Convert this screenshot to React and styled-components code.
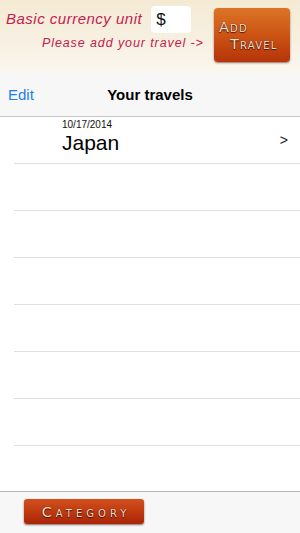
import styled, { createGlobalStyle } from "styled-components";

const travels = [{ date: "10/17/2014", name: "Japan" }];
const emptyRows = 7;

export default function App() {
  return (
    <>
      <Global />
      <Screen>
        <Header>
          <Labels>
            <CurrencyLine>
              <Script size={15} spacing={0.5}>Basic currency unit</Script>
              <CurrencyBox>$</CurrencyBox>
            </CurrencyLine>
            <Script size={12.5} spacing={0.9} indent={36}>Please add your travel -&gt;</Script>
          </Labels>
          <AddButton>
            <span>Add</span>
            <span>Travel</span>
          </AddButton>
        </Header>
        <NavBar>
          <NavEdit>Edit</NavEdit>
          <NavTitle>Your travels</NavTitle>
        </NavBar>
        <List>
          {travels.map(t => (
            <Row key={t.name}>
              <Cell>
                <DateText>{t.date}</DateText>
                <Name>{t.name}</Name>
              </Cell>
              <Chevron>&gt;</Chevron>
            </Row>
          ))}
          {Array.from({ length: emptyRows }).map((_, i) => (
            <Row key={i} />
          ))}
        </List>
        <Toolbar>
          <CategoryButton>Category</CategoryButton>
        </Toolbar>
      </Screen>
    </>
  );
}

const Global = createGlobalStyle`
  body {
    margin: 0;
    font-family: "Liberation Sans", Arial, sans-serif;
    background: #fff;
  }
`;

const Screen = styled.div`
  width: 300px;
  height: 533px;
  display: flex;
  flex-direction: column;
  overflow: hidden;
`;

const Header = styled.div`
  height: 73px;
  box-sizing: border-box;
  display: flex;
  justify-content: space-between;
  padding: 6px 10px 0 6px;
  background: linear-gradient(180deg, #f4ead4 0%, #f7f0e2 60%, #fbf8f1 100%);
`;

const Labels = styled.div`
  display: flex;
  flex-direction: column;
`;

const CurrencyLine = styled.div`
  display: flex;
  align-items: center;
  gap: 9px;
`;

const Script = styled.div`
  font-family: "Liberation Sans", Arial, sans-serif;
  font-style: italic;
  font-size: ${p => p.size}px;
  color: #c2214f;
  letter-spacing: ${p => p.spacing}px;
  padding-left: ${p => p.indent || 0}px;
  margin-top: ${p => (p.indent ? 3 : -2)}px;
`;

const CurrencyBox = styled.div`
  width: 40px;
  height: 27px;
  box-sizing: border-box;
  background: #fff;
  border-radius: 4px;
  font-size: 17px;
  color: #111;
  padding: 4px 0 0 5px;
`;

const AddButton = styled.div`
  width: 76px;
  height: 54px;
  margin-top: 2px;
  box-sizing: border-box;
  border-radius: 4px;
  background: linear-gradient(180deg, #dc7426 0%, #cc5414 50%, #b5340a 100%);
  box-shadow: 0 1px 2px rgba(80, 20, 0, 0.6);
  display: flex;
  flex-direction: column;
  justify-content: center;
  padding-left: 5px;
  gap: 1px;
  font-family: "DejaVu Sans", sans-serif;
  font-variant: small-caps;
  font-size: 14.5px;
  color: #ecdccc;
  letter-spacing: 1.2px;
  text-shadow: 0 0 1px #5a1a04, 0 1px 1px rgba(60, 10, 0, 0.9);
  span + span {
    padding-left: 11px;
  }
`;

const NavBar = styled.div`
  height: 43px;
  flex-shrink: 0;
  display: grid;
  grid-template-columns: 1fr auto 1fr;
  align-items: center;
  background: #f7f7f7;
  border-bottom: 1px solid #c8c7cc;
`;

const NavEdit = styled.div`
  padding-left: 8px;
  font-size: 15px;
  color: #1a7ef2;
`;

const NavTitle = styled.div`
  font-size: 15px;
  font-weight: bold;
  color: #000;
`;

const List = styled.div`
  flex: 1;
  overflow: hidden;
  background: #fff;
`;

const Row = styled.div`
  height: 46px;
  margin-left: 14px;
  border-bottom: 1px solid #e0e0e0;
  display: flex;
  align-items: center;
  justify-content: space-between;
`;

const Cell = styled.div`
  padding-left: 48px;
  display: flex;
  flex-direction: column;
  margin-top: -6px;
`;

const DateText = styled.div`
  font-size: 10px;
  color: #111;
`;

const Name = styled.div`
  font-size: 21px;
  color: #000;
  margin-top: 1px;
`;

const Chevron = styled.div`
  font-size: 14px;
  color: #222;
  padding-right: 12px;
  margin-top: -1px;
`;

const Toolbar = styled.div`
  height: 42px;
  flex-shrink: 0;
  box-sizing: border-box;
  background: #f7f7f7;
  border-top: 1px solid #b8b8b8;
  padding: 7px 0 0 24px;
`;

const CategoryButton = styled.div`
  width: 120px;
  height: 25px;
  box-sizing: border-box;
  border-radius: 3px;
  background: linear-gradient(180deg, #d2501e 0%, #c03a10 50%, #a82508 100%);
  box-shadow: 0 1px 2px rgba(60, 10, 0, 0.6);
  display: flex;
  align-items: center;
  justify-content: center;
  padding-left: 4px;
  font-family: "DejaVu Sans", sans-serif;
  font-variant: small-caps;
  font-size: 14.5px;
  letter-spacing: 4px;
  color: #ecdccc;
  text-shadow: 0 0 1px #5a1a04, 0 1px 1px rgba(60, 10, 0, 0.9);
`;
